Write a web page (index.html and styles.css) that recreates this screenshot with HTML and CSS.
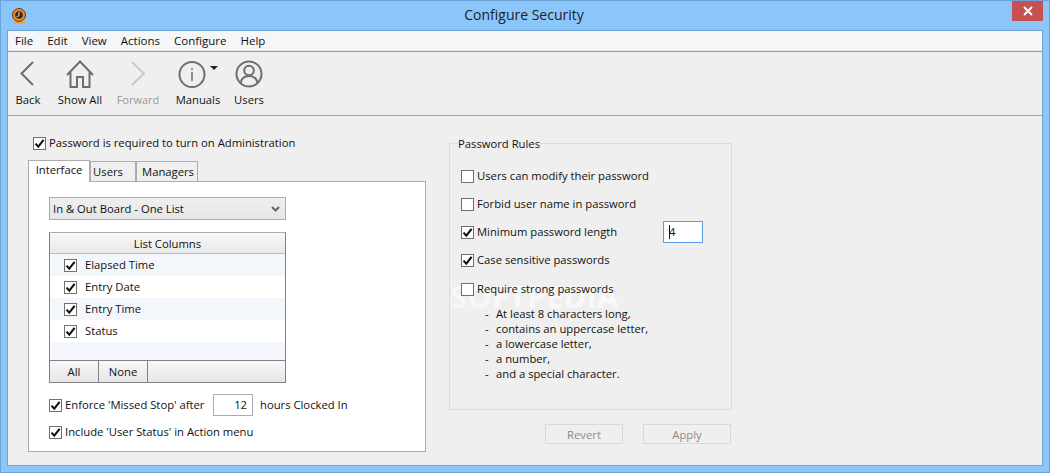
FILE: index.html
```html
<!DOCTYPE html>
<html lang="en">
<head>
<meta charset="utf-8">
<title>Configure Security</title>
<link rel="stylesheet" href="styles.css">
</head>
<body>
<svg class="defs" width="0" height="0" aria-hidden="true"><symbol id="tick" viewBox="0 0 11 11"><path d="M1.5 5.6 4.3 8.6 9.6 1.8" fill="none" stroke="#111" stroke-width="2.1"/></symbol></svg>
<div class="window">
  <header class="titlebar">
    <svg class="logo" viewBox="0 0 16 16" width="16" height="16"><path d="M2 14h12v1.500H2z" fill="#f0a030"/><circle cx="8" cy="7" r="6.500" fill="#ee8a24"/><circle cx="8" cy="7" r="6.500" fill="none" stroke="#6a3410"/><circle cx="8" cy="7" r="3.800" fill="#3a2a20"/><path d="M8 4V7.500L5.500 9" stroke="#f4d9a0" fill="none"/></svg>
    <div class="title">Configure Security</div>
    <div class="close"><svg viewBox="0 0 10 10" width="10" height="10"><path d="M1 1 9 9M9 1 1 9" stroke="#fff" stroke-width="2"/></svg></div>
  </header>
  <div class="client">
    <nav class="menu"><span>File</span><span>Edit</span><span>View</span><span>Actions</span><span>Configure</span><span>Help</span></nav>
    <div class="toolbar">
      <div class="tool w-back"><svg viewBox="0 0 40 30" width="40" height="30"><path d="M25 3 13.500 14.500 25 26" fill="none" stroke="#6e6e6e" stroke-width="2"/></svg><span>Back</span></div>
      <div class="tool w-home"><svg viewBox="0 0 40 30" width="40" height="30"><path d="M7 16 20 2.500 33 16M10.500 13V28H17V18H23V28H29.500V13" fill="none" stroke="#6e6e6e" stroke-width="2"/></svg><span>Show All</span></div>
      <div class="tool w-fwd disabled"><svg viewBox="0 0 40 30" width="40" height="30"><path d="M14 3 26 14.500 14 26" fill="none" stroke="#c9c9c9" stroke-width="2"/></svg><span>Forward</span></div>
      <div class="tool w-man"><svg viewBox="0 0 60 30" width="60" height="30"><circle cx="24" cy="15.500" r="12.500" fill="none" stroke="#6e6e6e" stroke-width="2"/><path d="M24 13V22M24 9V11" stroke="#6e6e6e" stroke-width="1.500"/><path d="M42 7H50L46 11Z" fill="#222"/></svg><span>Manuals</span></div>
      <div class="tool w-users"><svg viewBox="0 0 34 30" width="34" height="30"><circle cx="17" cy="15" r="12.500" fill="none" stroke="#6e6e6e" stroke-width="2"/><circle cx="17" cy="11.500" r="4.800" fill="none" stroke="#6e6e6e" stroke-width="2"/><path d="M8.500 24C9.500 18.500 13 17 17 17S24.500 18.500 25.500 24" fill="none" stroke="#6e6e6e" stroke-width="2"/></svg><span>Users</span></div>
    </div>
    <main class="main">
      <section class="left">
        <label class="check admin"><span class="cb"><svg><use href="#tick"/></svg></span>Password is required to turn on Administration</label>
        <div class="tabs"><span class="tab active">Interface</span><span class="tab t-users">Users</span><span class="tab t-man">Managers</span></div>
        <div class="panel">
          <div class="select"><span>In &amp; Out Board - One List</span><svg viewBox="0 0 9 6" width="9" height="6"><path d="M1 1 4.500 4.500 8 1" fill="none" stroke="#666" stroke-width="2"/></svg></div>
          <div class="listbox">
            <div class="listhead">List Columns</div>
            <div class="row tint"><span class="cb"><svg><use href="#tick"/></svg></span>Elapsed Time</div>
            <div class="row"><span class="cb"><svg><use href="#tick"/></svg></span>Entry Date</div>
            <div class="row tint"><span class="cb"><svg><use href="#tick"/></svg></span>Entry Time</div>
            <div class="row"><span class="cb"><svg><use href="#tick"/></svg></span>Status</div>
            <div class="row tint short"></div>
            <div class="listfoot"><span>All</span><span>None</span></div>
          </div>
          <div class="check enforce"><span class="cb"><svg><use href="#tick"/></svg></span><span class="enforce-label">Enforce 'Missed Stop' after</span><span class="num">12</span>hours Clocked In</div>
          <div class="check include"><span class="cb"><svg><use href="#tick"/></svg></span>Include 'User Status' in Action menu</div>
        </div>
      </section>
      <section class="right">
        <fieldset class="rules">
          <legend>Password Rules</legend>
          <div class="watermark">SOFTPEDIA</div>
          <div class="rule"><span class="cb"></span>Users can modify their password</div>
          <div class="rule"><span class="cb"></span>Forbid user name in password</div>
          <div class="rule"><span class="cb"><svg><use href="#tick"/></svg></span><span class="rule-label">Minimum password length</span><span class="len"><span class="caret"></span>4</span></div>
          <div class="rule"><span class="cb"><svg><use href="#tick"/></svg></span>Case sensitive passwords</div>
          <div class="rule strong"><span class="cb"></span>Require strong passwords</div>
          <ul class="reqs">
            <li>At least 8 characters long,</li>
            <li>contains an uppercase letter,</li>
            <li>a lowercase letter,</li>
            <li>a number,</li>
            <li>and a special character.</li>
          </ul>
        </fieldset>
        <div class="actions"><span class="btn revert">Revert</span><span class="btn apply">Apply</span></div>
      </section>
    </main>
  </div>
</div>
</body>
</html>
```
FILE: styles.css
```css
* { box-sizing: border-box; }
html, body { margin: 0; padding: 0; }
body { width: 1050px; height: 473px; overflow: hidden; font: 11.25px/16px "Open Sans", "Noto Sans", sans-serif; color: #111; }
.defs { position: absolute; }
.window { width: 1050px; height: 473px; background: #8ac6fa; border: 1px solid #6ea3d6; display: flex; flex-direction: column; }
.titlebar { height: 29px; display: flex; align-items: flex-start; flex: none; position: relative; padding-left: 10px; }
.logo { margin-top: 7px; }
.title { position: absolute; left: 0; right: 2px; top: 4px; text-align: center; font-size: 14px; line-height: 20px; color: #222; }
.close { position: absolute; right: 6px; top: 0; width: 31px; height: 20px; background: #c75050; display: flex; align-items: center; justify-content: center; }
.client { width: 1036px; height: 436px; margin-left: 6px; border: 1px solid #6ea3d6; background: #efefef; display: flex; flex-direction: column; }
.menu { height: 21px; font-size: 11.5px; background: #f5f6f7; border-bottom: 1px solid #a0a0a0; display: flex; padding: 2px 0 0 7px; gap: 14px; flex: none; box-shadow: inset 0 -1px 0 #e6e6e6; }
.toolbar { height: 64px; border-bottom: 1px solid #a0a0a0; display: flex; padding-top: 7px; flex: none; }
.tool { display: flex; flex-direction: column; align-items: center; }
.tool svg { height: 30px; flex: none; }
.tool span { margin-top: 3px; }
.w-back { width: 40px; }
.w-home { width: 64px; }
.w-fwd { width: 52px; font-size: 11px; }
.w-man { width: 68px; }
.w-users { width: 34px; }
.disabled { color: #999; }
.main { flex: 1; display: flex; gap: 23px; padding-left: 20px; }
.left { width: 398px; }
.right { width: 283px; padding-top: 19px; }
.cb { width: 13px; height: 13px; border: 1px solid #707070; background: #fff; display: inline-flex; align-items: center; justify-content: center; flex: none; }
.cb svg { width: 11px; height: 11px; }
.check { display: flex; align-items: center; gap: 3px; }
.admin { margin: 19px 0 0 5px; height: 16px; }
.tabs { display: flex; margin-top: 8px; height: 22px; align-items: flex-end; position: relative; }
.tab { height: 20px; border: 1px solid #acacac; border-bottom: 0; background: #efefef; text-align: center; line-height: 20px; }
.tab.active { height: 22px; width: 62px; background: #fff; line-height: 18px; position: relative; top: 1px; z-index: 1; }
.t-users { width: 46px; padding-right: 10px; }
.t-man { width: 62px; padding-left: 2px; }
.panel { height: 271px; background: #fff; border: 1px solid #acacac; padding: 15px 0 0 20px; }
.select { width: 237px; height: 23px; border: 1px solid #acacac; background: linear-gradient(#f0f0f0, #e5e5e5); display: flex; justify-content: space-between; align-items: center; padding: 0 5px 0 3px; }
.listbox { width: 237px; height: 151px; margin-top: 12px; border: 1px solid #828282; border-top-color: #acacac; display: flex; flex-direction: column; }
.listhead { height: 21px; flex: none; text-align: center; line-height: 21px; background: linear-gradient(#f8f8f8, #e8e8e8); border-bottom: 1px solid #bdbdbd; }
.row { height: 22px; flex: none; display: flex; align-items: center; gap: 8px; padding-left: 14px; }
.row.tint { background: #f3f6fb; }
.row.short { height: 18px; }
.listfoot { flex: 1; border-top: 1px solid #828282; background: linear-gradient(#f8f8f8, #e6e6e6); display: flex; line-height: 21px; }
.listfoot span { width: 49px; text-align: center; border-right: 1px solid #828282; }
.enforce { margin-top: 11px; height: 22px; }
.enforce-label { width: 145px; }
.num { width: 40px; height: 22px; margin-right: 4px; border: 1px solid #acacac; text-align: right; padding-right: 5px; line-height: 20px; background: #fff; }
.include { margin-top: 5px; height: 22px; }
.rules { position: relative; margin: 0; width: 283px; height: 275px; padding: 11px 0 0 11px; border: 1px solid #dcdcdc; }
.rules legend { padding: 0; margin-left: -3px; line-height: 16px; position: relative; top: 1px; }
.rule { height: 28px; display: flex; align-items: center; gap: 3px; position: relative; }
.rule.strong { margin-top: 1px; }
.rule-label { width: 183px; }
.len { width: 40px; height: 22px; border: 1px solid #569de5; background: #fff; line-height: 20px; padding-left: 5px; position: relative; }
.caret { position: absolute; left: 5px; top: 3px; width: 1px; height: 14px; background: #111; }
.reqs { list-style: none; margin: 3px 0 0; padding: 0 0 0 24px; line-height: 15px; position: relative; }
.reqs li::before { content: "-"; display: inline-block; width: 11px; }
.watermark { position: absolute; left: 0; top: 132px; font: 700 31px/26px "Open Sans", sans-serif; color: rgba(255, 255, 255, .6); pointer-events: none; }
.actions { display: flex; margin-top: 14px; padding-left: 96px; }
.btn { height: 20px; border: 1px solid #d9d9d9; background: #efefef; color: #8a8a8a; text-align: center; line-height: 19px; }
.revert { width: 78px; }
.apply { width: 88px; margin-left: 20px; }
```
